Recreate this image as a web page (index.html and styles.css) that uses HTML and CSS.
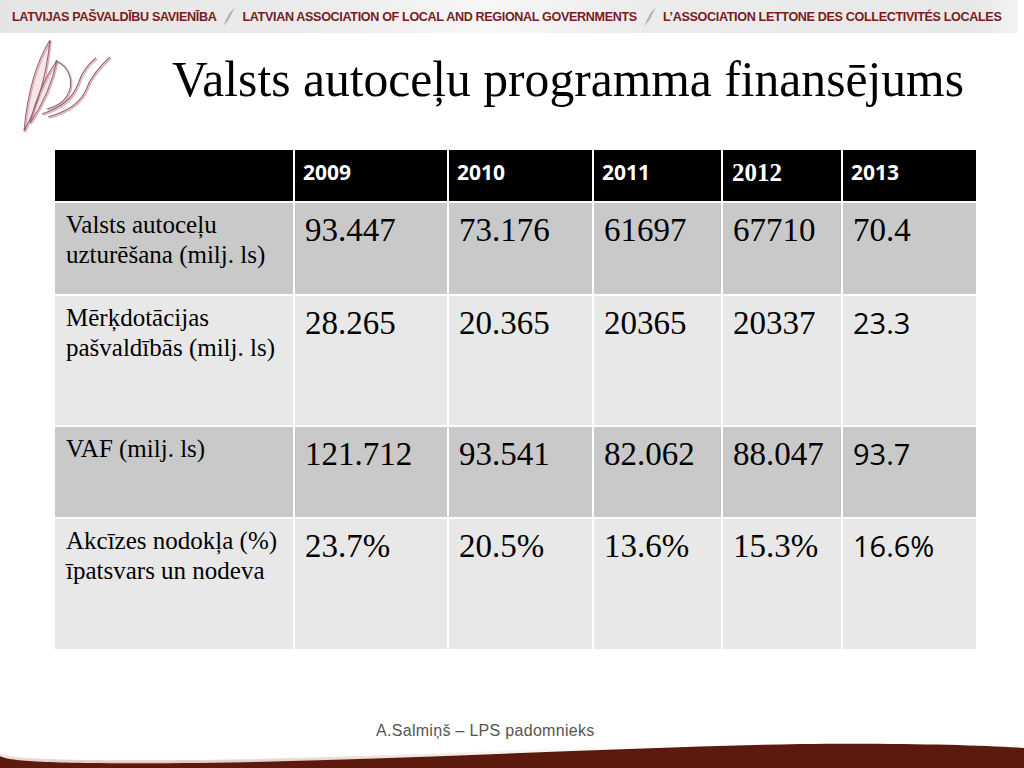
FILE: index.html
```html
<!DOCTYPE html>
<html lang="lv">
<head>
<meta charset="utf-8">
<title>Valsts autoceļu programma finansējums</title>
<link rel="stylesheet" href="styles.css">
</head>
<body>
<div class="page">
  <header class="banner">
    <span>LATVIJAS PAŠVALDĪBU SAVIENĪBA</span>
    <svg class="sep" viewBox="0 0 14 20" width="14" height="20"><path d="M1,19 C4,15 5,6 13,1 C9,6 8,14 1,19 Z" fill="#b4b4b4"/></svg>
    <span>LATVIAN ASSOCIATION OF LOCAL AND REGIONAL GOVERNMENTS</span>
    <svg class="sep" viewBox="0 0 14 20" width="14" height="20"><path d="M1,19 C4,15 5,6 13,1 C9,6 8,14 1,19 Z" fill="#b4b4b4"/></svg>
    <span>L’ASSOCIATION LETTONE DES COLLECTIVITÉS LOCALES</span>
  </header>

  <section class="top">
    <svg class="logo" viewBox="18 36 100 100" width="100" height="100">
      <g fill="#f6e6e9" stroke="#e2a9b5" stroke-width="1.4" transform="translate(1.2,1.2)">
        <path d="M24,131 C27,98 35,64 50,40 C47,70 40,102 24,131 Z"/>
        <path d="M30,123 C36,97 46,76 57,60 C53,80 43,104 30,123 Z"/>
        <path d="M56,61 C69,66 75,82 67,96 C63,103 56,106 47,109" fill="none"/>
        <path d="M42,114 C60,108 72,100 78,84 C82,72 88,64 96,58" fill="none"/>
        <path d="M48,117 C66,112 80,104 86,90 C90,78 98,68 110,57" fill="none"/>
      </g>
      <g fill="none" stroke="#8a6870" stroke-width="1.1">
        <path d="M24,131 C27,98 35,64 50,40 C47,70 40,102 24,131 Z"/>
        <path d="M30,123 C36,97 46,76 57,60 C53,80 43,104 30,123 Z"/>
        <path d="M56,61 C69,66 75,82 67,96 C63,103 56,106 47,109"/>
        <path d="M42,114 C60,108 72,100 78,84 C82,72 88,64 96,58"/>
        <path d="M48,117 C66,112 80,104 86,90 C90,78 98,68 110,57"/>
      </g>
    </svg>
    <h1 class="title">Valsts autoceļu programma finansējums</h1>
  </section>

  <div class="grid">
    <div class="hd"></div>
    <div class="hd">2009</div>
    <div class="hd">2010</div>
    <div class="hd">2011</div>
    <div class="hd hd-serif">2012</div>
    <div class="hd">2013</div>

    <div class="lbl dark">Valsts autoceļu<br>uzturēšana (milj. ls)</div>
    <div class="num dark">93.447</div>
    <div class="num dark">73.176</div>
    <div class="num dark">61697</div>
    <div class="num dark">67710</div>
    <div class="num dark">70.4</div>

    <div class="lbl light">Mērķdotācijas<br>pašvaldībās (milj. ls)</div>
    <div class="num light">28.265</div>
    <div class="num light">20.365</div>
    <div class="num light">20365</div>
    <div class="num light">20337</div>
    <div class="num sans light">23.3</div>

    <div class="lbl dark">VAF (milj. ls)</div>
    <div class="num dark">121.712</div>
    <div class="num dark">93.541</div>
    <div class="num dark">82.062</div>
    <div class="num dark">88.047</div>
    <div class="num sans dark">93.7</div>

    <div class="lbl light">Akcīzes nodokļa (%)<br>īpatsvars un nodeva</div>
    <div class="num light">23.7%</div>
    <div class="num light">20.5%</div>
    <div class="num light">13.6%</div>
    <div class="num light">15.3%</div>
    <div class="num sans light">16.6%</div>
  </div>

  <footer class="footer">A.Salmiņš – LPS padomnieks</footer>
  <svg class="wave" viewBox="0 0 1024 27" width="1024" height="27" preserveAspectRatio="none">
    <defs>
      <linearGradient id="glow" x1="0" y1="0" x2="0" y2="1">
        <stop offset="0" stop-color="#ffffff" stop-opacity="0"/>
        <stop offset="1" stop-color="#d8b8b0" stop-opacity="0.8"/>
      </linearGradient>
    </defs>
    <path d="M0,12 C10,18 60,20 200,19 C400,16 600,4 800,0 C900,-1 980,1 1024,4 L1024,7 C980,4 900,2 800,3 C600,7 400,19 200,22 C60,23 10,21 0,15 Z" fill="url(#glow)"/>
    <path d="M0,15 C10,21 60,23 200,22 C400,19 600,7 800,3 C900,2 980,4 1024,7 L1024,27 L0,27 Z" fill="#5b1a0d"/>
  </svg>
</div>
</body>
</html>
```

FILE: styles.css
```css
html, body {
  margin: 0;
  padding: 0;
  background: #ffffff;
}

body {
  width: 1024px;
  height: 768px;
  overflow: hidden;
}

.page {
  display: flex;
  flex-direction: column;
  width: 1024px;
  height: 768px;
}

.banner {
  height: 33px;
  flex: 0 0 33px;
  display: flex;
  align-items: center;
  gap: 6px;
  padding-left: 12px;
  box-sizing: border-box;
  width: 1018px;
  background: linear-gradient(to right, #e4e4e4 0%, #ebebeb 30%, #f7f7f7 48%, #ececec 62%, #e8e8e8 96%, #f4f4f4 100%);
  font-family: "Liberation Sans", Arial, sans-serif;
  font-weight: bold;
  font-size: 12.6px;
  letter-spacing: -0.35px;
  color: #7a1c1c;
  white-space: nowrap;
}

.sep {
  display: block;
  flex: 0 0 14px;
}

.top {
  height: 117px;
  flex: 0 0 117px;
  display: flex;
  align-items: flex-start;
}

.logo {
  display: block;
  margin: 3px 0 0 18px;
  flex: 0 0 100px;
}

.title {
  margin: 22px 0 0 54px;
  font-family: "Liberation Serif", "Times New Roman", serif;
  font-weight: normal;
  font-size: 49.6px;
  line-height: 50px;
  color: #000;
  white-space: nowrap;
}

.grid {
  margin-left: 55px;
  width: 921px;
  flex: 0 0 499px;
  display: grid;
  grid-template-columns: 238px 152px 143px 127px 118px 133px;
  grid-template-rows: 51px 91px 129px 90px 130px;
  gap: 2px;
  background: #ffffff;
}

.grid > div {
  box-sizing: border-box;
  padding-top: 6.5px;
  color: #000;
  white-space: nowrap;
}

.hd {
  background: #000;
  color: #fff !important;
  font-family: "Open Sans", sans-serif;
  font-weight: bold;
  font-size: 21px;
  line-height: 30px;
  padding-left: 8px;
}

.grid > .hd-serif {
  font-family: "Liberation Serif", "Times New Roman", serif;
  font-size: 25px;
  padding-left: 9px;
  padding-top: 8px;
}

.dark {
  background: #c9c9c9;
}

.light {
  background: #e8e8e8;
}

.lbl {
  font-family: "Liberation Serif", "Times New Roman", serif;
  font-size: 25px;
  line-height: 30px;
  padding-left: 11px;
}

.grid > .num {
  font-family: "Liberation Serif", "Times New Roman", serif;
  font-size: 33px;
  line-height: 40px;
  padding-left: 10px;
  padding-top: 7px;
}

.grid > .num.sans {
  font-family: "Open Sans", sans-serif;
  font-size: 29px;
  padding-top: 6.5px;
}

.footer {
  margin-top: 72px;
  height: 20px;
  flex: 0 0 20px;
  padding-left: 376px;
  font-family: "Liberation Sans", Arial, sans-serif;
  font-size: 16px;
  letter-spacing: 0.3px;
  line-height: 20px;
  color: #555555;
  white-space: nowrap;
}

.wave {
  display: block;
  flex: 0 0 27px;
}
```
